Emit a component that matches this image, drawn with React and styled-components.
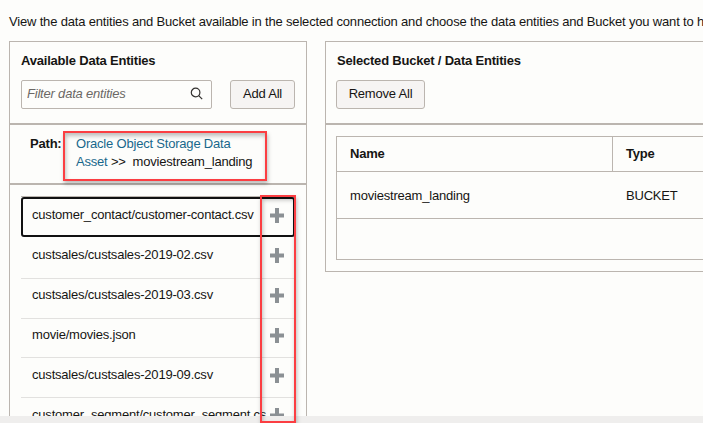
import React from "react";
import styled, { createGlobalStyle } from "styled-components";

const line = "#bbb5af";

const GlobalStyle = createGlobalStyle`
  * { box-sizing: border-box; }
  body {
    margin: 0;
    overflow: hidden;
    background: #efeeed;
    color: #161513;
    font: 13px/18px "Liberation Sans", Arial, sans-serif;
    letter-spacing: -0.2px;
  }
`;

const Page = styled.main`
  position: relative;
  width: 703px;
  height: 423px;
  overflow: hidden;
`;

const Content = styled.div`
  height: 416px;
  overflow: hidden;
  background: #fdfdfb;
`;

const Intro = styled.p`
  margin: 0;
  height: 41px;
  padding: 13px 0 0 9px;
  white-space: nowrap;
  letter-spacing: -0.175px;
`;

const Panels = styled.div`
  display: grid;
  grid-template-columns: 298px 400px;
  column-gap: 18px;
  align-items: start;
  padding-left: 9px;
`;

const Panel = styled.section`
  border: 1px solid ${line};
  height: ${(p) => p.$height}px;
`;

const PanelHead = styled.header`
  height: 83px;
  padding: 10px 11px 0 ${(p) => p.$indent || 11}px;
  border-bottom: 2px solid ${line};
`;

const Title = styled.h2`
  margin: 0 0 10px ${(p) => p.$shift || 0}px;
  font-size: 13px;
  line-height: 18px;
  font-weight: 700;
`;

const Tools = styled.div`
  display: flex;
  justify-content: space-between;
`;

const Search = styled.label`
  display: flex;
  align-items: center;
  width: 191px;
  height: 29px;
  padding: 0 8px 2px 5px;
  border: 1px solid ${line};
  border-radius: 2px;
`;

const SearchInput = styled.input`
  flex: 1;
  min-width: 0;
  padding: 0;
  border: 0;
  outline: 0;
  background: transparent;
  font: italic 13px "Liberation Sans", Arial, sans-serif;
  letter-spacing: inherit;
  &::placeholder { color: #6b6865; opacity: 1; }
`;

const Button = styled.button`
  width: ${(p) => p.$width}px;
  height: 29px;
  padding: 0 0 3px;
  border: 1px solid ${line};
  border-radius: 3px;
  background: #f6f4f3;
  color: #161513;
  font: 13px "Liberation Sans", Arial, sans-serif;
  letter-spacing: inherit;
`;

const PathBar = styled.div`
  display: flex;
  height: 60px;
  padding: 10px 0 0 20px;
  border-bottom: 2px solid ${line};
`;

const PathLabel = styled.strong`
  width: 46px;
`;

const PathText = styled.div`
  width: 190px;
  white-space: pre;
`;

const PathLink = styled.a`
  color: #19688c;
`;

const List = styled.ul`
  margin: 11px 11px 0;
  padding: 0;
  list-style: none;
  border-top: 1px solid ${line};
`;

const Item = styled.li`
  display: flex;
  justify-content: space-between;
  width: 274px;
  height: ${(p) => p.$height}px;
  padding: ${(p) => p.$top}px ${(p) => (p.$active ? 9 : 11)}px 0;
  border: 0 solid #e2e1df;
  border-bottom-width: 1px;
  white-space: nowrap;
  ${(p) => p.$active && "border: 2px solid #111; border-radius: 3px;"}
`;

const FileName = styled.span`
  width: 234px;
  overflow: hidden;
`;

const Plus = styled.svg`
  flex: none;
  width: 14px;
  height: 15px;
  margin-top: 2px;
`;

const Table = styled.div`
  margin: 11px 0 0 10px;
  height: 124px;
  border: 1px solid ${line};
`;

const Row = styled.div`
  display: grid;
  grid-template-columns: 276px 1fr;
  height: ${(p) => p.$height}px;
  padding-top: ${(p) => (p.$head ? 0 : 2)}px;
  border-bottom: 1px solid ${line};
  font-weight: ${(p) => (p.$head ? 700 : 400)};
`;

const Cell = styled.div`
  display: flex;
  align-items: center;
  padding: 0 13px;
  border-right: ${(p) => (p.$divided ? `1px solid ${line}` : "0")};
`;

const Callout = styled.div`
  position: absolute;
  left: ${(p) => p.$x}px;
  top: ${(p) => p.$y}px;
  width: ${(p) => p.$w}px;
  height: ${(p) => p.$h}px;
  border: 2px solid #fb3e42;
  box-shadow: 1px 3px 4px rgba(0, 0, 0, 0.25), inset 1px 3px 4px rgba(0, 0, 0, 0.25);
  pointer-events: none;
`;

const files = [
  { name: "customer_contact/customer-contact.csv", height: 40, top: 7, active: true },
  { name: "custsales/custsales-2019-02.csv", height: 42, top: 9 },
  { name: "custsales/custsales-2019-03.csv", height: 40, top: 7 },
  { name: "movie/movies.json", height: 39, top: 7 },
  { name: "custsales/custsales-2019-09.csv", height: 40, top: 8 },
  { name: "customer_segment/customer_segment.csv", height: 40, top: 8 },
];

const PlusIcon = () => (
  <Plus viewBox="0 0 14 15">
    <path d="M7 0v15M0 7.5h14" stroke="#8b9094" strokeWidth="4" />
  </Plus>
);

const SearchIcon = () => (
  <svg width="13" height="13" viewBox="0 0 13 13" fill="none" stroke="#33312f" strokeWidth="1.2">
    <circle cx="5.6" cy="5.5" r="4.3" />
    <path d="M8.7 8.6l3.5 3.5" />
  </svg>
);

export default function App() {
  return (
    <Page>
      <GlobalStyle />
      <Content>
        <Intro>
          View the data entities and Bucket available in the selected connection and choose the data entities and Bucket you want to h
        </Intro>
        <Panels>
          <Panel $height={400}>
            <PanelHead>
              <Title>Available Data Entities</Title>
              <Tools>
                <Search>
                  <SearchInput placeholder="Filter data entities" />
                  <SearchIcon />
                </Search>
                <Button $width={65}>Add All</Button>
              </Tools>
            </PanelHead>
            <PathBar>
              <PathLabel>Path:</PathLabel>
              <PathText>
                <PathLink>{"Oracle Object Storage Data\nAsset"}</PathLink>
                {" >>  moviestream_landing"}
              </PathText>
            </PathBar>
            <List>
              {files.map((f) => (
                <Item key={f.name} $active={f.active} $height={f.height} $top={f.top}>
                  <FileName>{f.name}</FileName>
                  <PlusIcon />
                </Item>
              ))}
            </List>
          </Panel>
          <Panel $height={231}>
            <PanelHead $indent={10}>
              <Title $shift={1}>Selected Bucket / Data Entities</Title>
              <Tools>
                <Button $width={89}>Remove All</Button>
              </Tools>
            </PanelHead>
            <Table>
              <Row $height={35} $head>
                <Cell $divided>Name</Cell>
                <Cell>Type</Cell>
              </Row>
              <Row $height={47}>
                <Cell>moviestream_landing</Cell>
                <Cell>BUCKET</Cell>
              </Row>
            </Table>
          </Panel>
        </Panels>
      </Content>
      <Callout $x={63} $y={131} $w={204} $h={50} />
      <Callout $x={260} $y={195} $w={36} $h={228} />
    </Page>
  );
}
